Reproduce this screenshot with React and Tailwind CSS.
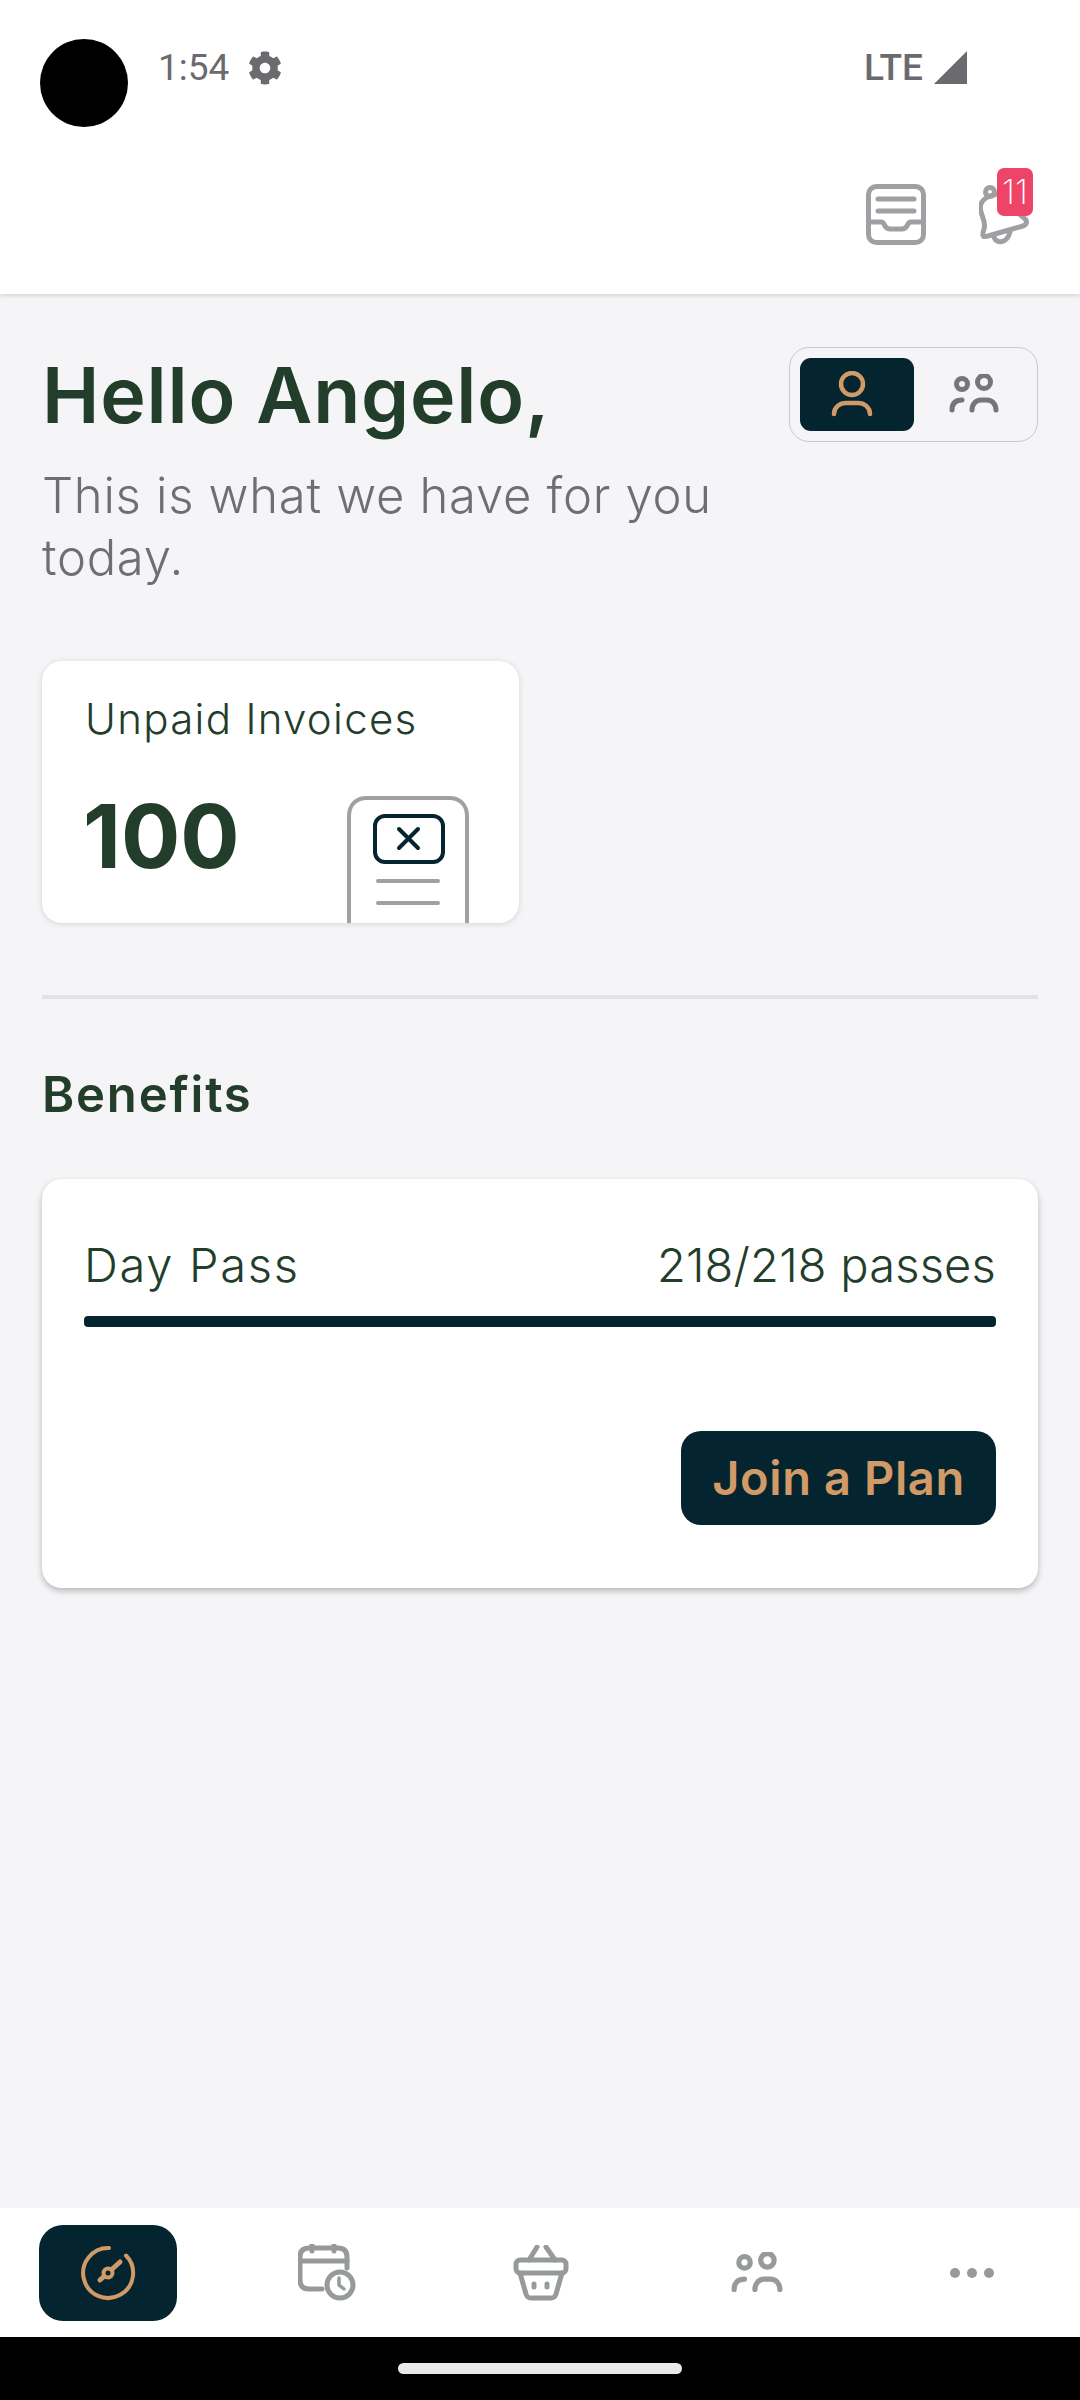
import { FaCog } from 'react-icons/fa';

const navy = '#04252f';
const orange = '#d19a66';
const navGray = '#979b98';

const InboxIcon = () => (
  <svg width="60" height="61" viewBox="0 0 60 61" fill="none" stroke="#a09fa3" strokeWidth="5" strokeLinecap="round">
    <rect x="2.5" y="2.5" width="55" height="56" rx="8" />
    <path d="M12 15H48M12 27H48" />
    <path d="M3 38H15q2 0 3 2l1 2q2 3 5 3H36q3 0 5-3l1-2q1-2 3-2H57" />
  </svg>
);

const BellIcon = () => (
  <svg width="50" height="60" viewBox="0 0 50 60" fill="none" stroke="#a09fa3" strokeWidth="5" strokeLinecap="round" strokeLinejoin="round">
    <circle cx="11" cy="7" r="4.5" />
    <path d="M11 11C3 14 0 20 2 27C4 34 7 38 5 44C3 50 3 53 9 51L44 41C49 39 48 35 45 33C39 29 38 25 36 18C33 8 22 7 11 11Z" />
    <path d="M15 52C17 59 28 59 31 47" />
  </svg>
);

const PersonIcon = () => (
  <svg width="42" height="48" viewBox="0 0 42 48" fill="none" stroke={orange} strokeWidth="4.5" strokeLinecap="round">
    <circle cx="21" cy="13" r="11" />
    <path d="M3 43c0-7 6-11 12-11H27c6 0 12 4 12 11" />
  </svg>
);

const GroupIcon = ({ color, width = 50 }) => (
  <svg width={width} height={width * 0.84} viewBox="0 0 50 42" fill="none" stroke={color} strokeWidth="5" strokeLinecap="round">
    <circle cx="13" cy="10" r="5.5" />
    <circle cx="35" cy="8" r="6.5" />
    <path d="M3 36c0-6 3-10 10-10" />
    <path d="M23 36c0-6 4-10 9-10H38c5 0 9 4 9 10" />
  </svg>
);

const InvoiceIcon = () => (
  <svg width="122" height="127" viewBox="0 0 122 127" fill="none" strokeLinecap="round" className="block">
    <path d="M2 130V20C2 9 9 2 20 2H102C113 2 120 9 120 20V130" stroke="#a09fa3" strokeWidth="4" />
    <rect x="28" y="20" width="68" height="46" rx="10" stroke={navy} strokeWidth="4" />
    <path d="M52 33L71 52M71 33L52 52" stroke={navy} strokeWidth="4" />
    <path d="M31 85H91M31 107H91" stroke="#a09fa3" strokeWidth="4" />
  </svg>
);

const CompassIcon = () => (
  <svg width="56" height="56" viewBox="0 0 56 56" fill="none" stroke={orange} strokeLinecap="round">
    <path d="M29 3A25 25 0 1 0 46 10.5" strokeWidth="4" />
    <path d="M20 35L40 17" strokeWidth="5" />
    <circle cx="28" cy="28" r="6.5" fill={orange} stroke="none" />
    <circle cx="28" cy="28" r="2.5" fill={navy} stroke="none" />
  </svg>
);

const CalendarIcon = () => (
  <svg width="60" height="58" viewBox="0 0 60 58" fill="none" stroke={navGray} strokeWidth="5" strokeLinecap="round">
    <path d="M49 24V13C49 7 46 4 40 4H11C5 4 2 7 2 13V36C2 42 5 45 11 45H24" />
    <path d="M2 17H49M14 1V7M36 1V7" />
    <circle cx="42" cy="41" r="13" />
    <path d="M41 34V41L46 45" strokeWidth="3.5" />
  </svg>
);

const BasketIcon = () => (
  <svg width="56" height="56" viewBox="0 0 56 56" fill="none" stroke={navGray} strokeWidth="5" strokeLinecap="round" strokeLinejoin="round">
    <path d="M24 2L16 15M33 2L42 15" />
    <rect x="3" y="15" width="50" height="13" rx="4" />
    <path d="M7 28L13 49C14 52 15 53 18 53H38C41 53 42 52 43 49L49 28" />
    <path d="M21 39V42M34 39V42" />
  </svg>
);

const DotsIcon = () => (
  <svg width="46" height="12" viewBox="0 0 46 12" fill={navGray}>
    <circle cx="6" cy="6" r="5" />
    <circle cx="23" cy="6" r="5" />
    <circle cx="40" cy="6" r="5" />
  </svg>
);

const App = () => {
  return (
    <div className="flex h-[2400px] w-[1080px] flex-col overflow-hidden bg-[#f5f4f7] font-['Inter',sans-serif] text-[#233d2b]">
      {/* status bar + actions */}
      <header className="z-10 h-[294px] bg-white shadow-[0_1px_5px_rgba(0,0,0,0.18)]">
        <div className="flex h-[168px] items-start pl-[40px] pr-[113px] pt-[39px]">
          <div className="h-[88px] w-[88px] rounded-full bg-black" />
          <span className="ml-[30px] mt-[9px] font-['Roboto',sans-serif] text-[37px] leading-[40px] text-[#6b6a6e]">1:54</span>
          <FaCog className="ml-[19px] mt-[12px] text-[#6b6a6e]" size={34} />
          <span className="ml-auto mt-[9px] font-['Roboto',sans-serif] text-[37px] font-medium leading-[40px] text-[#6b6a6e]">LTE</span>
          <svg className="ml-[11px] mt-[12px]" width="33" height="33" viewBox="0 0 33 33" fill="#6b6a6e">
            <path d="M33 0V33H0Z" />
          </svg>
        </div>
        <div className="flex justify-end pr-[51px]">
          <div className="mt-[16px]"><InboxIcon /></div>
          <div className="relative ml-[53px] mt-[17px] h-[60px] w-[50px]">
            <BellIcon />
            <span className="absolute left-[18px] top-[-17px] flex h-[48px] w-[36px] items-center justify-center rounded-[7px] bg-[#ee4468] text-[34px] font-extralight leading-none text-white">11</span>
          </div>
        </div>
      </header>

      <main className="flex-1 px-[42px]">
        <div className="flex items-start justify-between pt-[53px]">
          <div>
            <h1 className="mt-[5px] text-[77px] font-semibold leading-[86px] tracking-[0.8px]">Hello Angelo,</h1>
            <p className="mt-[27px] w-[720px] text-[49px] font-light leading-[62px] tracking-[0.7px] text-[#6f6e72]">This is what we have for you today.</p>
          </div>
          <div className="flex h-[95px] w-[249px] rounded-[20px] border border-[#c9c8cc] p-[10px]">
            <div className="flex h-[73px] w-[114px] items-center justify-center rounded-[11px] bg-[#04252f] pr-[10px]"><PersonIcon /></div>
            <div className="flex flex-1 items-center justify-center pl-[6px]"><GroupIcon color="#767579" /></div>
          </div>
        </div>

        <section className="mt-[72px] h-[262px] w-[477px] overflow-hidden rounded-[20px] bg-white shadow-[0_1px_6px_rgba(0,0,0,0.14)]">
          <p className="pl-[43px] pt-[33px] text-[42px] font-light leading-[50px] tracking-[1.3px]">Unpaid Invoices</p>
          <div className="flex items-end justify-between pl-[41px] pr-[50px] pt-[37px]">
            <span className="mb-[31px] text-[88px] font-bold leading-[111px]">100</span>
            <InvoiceIcon />
          </div>
        </section>

        <hr className="mt-[72px] h-[4px] border-0 bg-[#e3e2e5]" />

        <h2 className="mt-[68px] text-[49px] font-semibold leading-[56px] tracking-[1.8px]">Benefits</h2>

        <section className="mt-[56px] h-[409px] rounded-[20px] bg-white px-[42px] pt-[56px] shadow-[0_3px_6px_rgba(0,0,0,0.25)]">
          <div className="flex justify-between text-[47px] font-light leading-[60px]">
            <span className="tracking-[1.7px]">Day Pass</span>
            <span className="tracking-[0.2px]">218/218 passes</span>
          </div>
          <div className="mt-[21px] h-[11px] rounded-[4px] bg-[#04252f]" />
          <div className="mt-[104px] flex justify-end">
            <button className="h-[94px] w-[315px] rounded-[20px] bg-[#04252f] text-[47px] font-semibold tracking-[0.6px] text-[#d19a66]">Join a Plan</button>
          </div>
        </section>
      </main>

      <nav className="grid h-[129px] grid-cols-5 items-center bg-white">
        <div className="flex justify-center">
          <div className="flex h-[96px] w-[138px] items-center justify-center rounded-[24px] bg-[#04252f]"><CompassIcon /></div>
        </div>
        <div className="flex justify-center pl-[7px]"><CalendarIcon /></div>
        <div className="flex justify-center pl-[2px]"><BasketIcon /></div>
        <div className="flex justify-center pt-[2px] pl-[1px]"><GroupIcon color={navGray} width={52} /></div>
        <div className="flex justify-center"><DotsIcon /></div>
      </nav>

      <div className="flex h-[63px] justify-center bg-black pt-[26px]">
        <div className="h-[11px] w-[284px] rounded-full bg-[#e9e8eb]" />
      </div>
    </div>
  );
};

export default App;
